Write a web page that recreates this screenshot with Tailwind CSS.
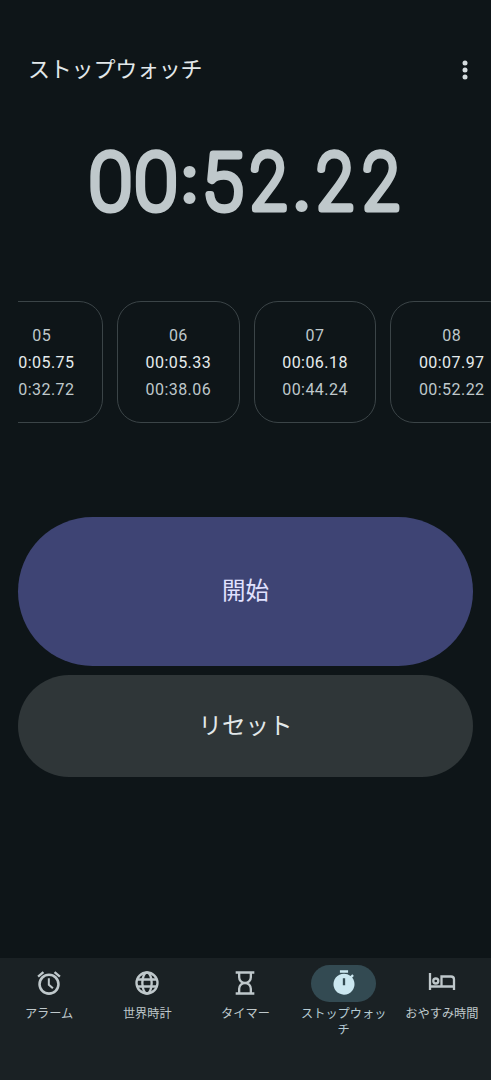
<!DOCTYPE html>
<html lang="ja">
<head>
<meta charset="utf-8">
<title>ストップウォッチ</title>
<script src="https://cdn.jsdelivr.net/npm/@tailwindcss/browser@4"></script>
</head>
<body class="bg-[#0e1518] overflow-hidden font-['Noto_Sans_CJK_JP',sans-serif]">
<div class="w-[491px] h-[1080px] flex flex-col overflow-hidden">
  <header class="h-[140px] shrink-0 flex items-center justify-between pl-7 pr-[18px]">
    <h1 class="text-[22px] leading-8 tracking-[-0.2px] text-[#e2e8ea] pb-[7px]">ストップウォッチ</h1>
    <svg class="w-4 h-6" viewBox="0 0 16 24" fill="#d5dcde"><circle cx="8" cy="5" r="2.5"/><circle cx="8" cy="12" r="2.5"/><circle cx="8" cy="19" r="2.5"/></svg>
  </header>
  <div class="h-[161px] shrink-0">
    <svg class="w-[491px] h-[90px] overflow-visible font-['Roboto',sans-serif] font-thin text-[77.5px]" viewBox="0 140 491 90" fill="#bfc8cb" stroke="#bfc8cb" stroke-width="7.2" stroke-linejoin="round" stroke-linecap="round" text-anchor="middle">
      <text y="208.500" x="110.500 156">00</text>
      <text y="201" x="189.500" stroke-width="5" class="text-[62px] font-normal">:</text>
      <g transform="translate(222.500 208.500) scale(.96 1)"><text>5</text></g>
      <g transform="translate(268.500 208.500) scale(.87 1)"><text>2</text></g>
      <text y="209" x="302" stroke-width="5" class="text-[62px] font-normal">.</text>
      <g transform="translate(335 208.500) scale(.87 1)"><text x="0 52.900">22</text></g>
    </svg>
  </div>
  <section class="ml-[18px] h-[122px] shrink-0 overflow-hidden flex font-['Roboto',sans-serif] text-[16px] leading-[27px] tracking-[0.45px] text-center text-[#bfc8cb]">
    <div class="flex gap-[14px] -ml-[37.7px] shrink-0">
      <div class="w-[122.7px] h-[122px] shrink-0 rounded-[24px] border border-[#3b4447] pt-5"><p>05</p><p class="text-[#e6eced]">00:05.75</p><p>00:32.72</p></div>
      <div class="w-[122.7px] h-[122px] shrink-0 rounded-[24px] border border-[#3b4447] pt-5"><p>06</p><p class="text-[#e6eced]">00:05.33</p><p>00:38.06</p></div>
      <div class="w-[122.7px] h-[122px] shrink-0 rounded-[24px] border border-[#3b4447] pt-5"><p>07</p><p class="text-[#e6eced]">00:06.18</p><p>00:44.24</p></div>
      <div class="w-[122.7px] h-[122px] shrink-0 rounded-[24px] border border-[#3b4447] pt-5"><p>08</p><p class="text-[#e6eced]">00:07.97</p><p>00:52.22</p></div>
    </div>
  </section>
  <main class="mt-[94px] px-[18px] flex flex-col gap-[9px] text-[23.5px]">
    <button class="h-[149px] rounded-full bg-[#3e4474] text-[#e0e1ff] pb-[3px]">開始</button>
    <button class="h-[102px] rounded-full bg-[#2f3638] text-[#e2e8ea] pb-[3px]">リセット</button>
  </main>
  <nav class="mt-auto h-[122px] shrink-0 bg-[#1a2124] grid grid-cols-5 pt-[7px] text-[12.2px] leading-[15.5px] text-center text-[#bfc8cb]">
    <div class="flex flex-col items-center gap-1">
      <span class="w-[65px] h-[37px] flex items-center justify-center pb-0.5"><svg class="size-7" viewBox="0 0 24 24" fill="currentColor"><path d="m22 5.720-4.600-3.860-1.290 1.530 4.600 3.860zM7.880 3.390 6.600 1.860 2 5.710l1.290 1.530zM12.700 8H11v6l3.750 3.200 1.200-1.350-3.250-2.750zM12 3.800a9.200 9.200 0 1 0 0 18.400 9.200 9.200 0 0 0 0-18.400m0 16.200a7 7 0 1 1 0-14 7 7 0 0 1 0 14"/></svg></span>
      <span>アラーム</span>
    </div>
    <div class="flex flex-col items-center gap-1">
      <span class="w-[65px] h-[37px] flex items-center justify-center pb-0.5"><svg class="size-7" viewBox="0 0 24 24" fill="none" stroke="currentColor" stroke-width="2"><circle cx="12" cy="12" r="9"/><ellipse cx="12" cy="12" rx="4" ry="9"/><path d="M3.7 9h16.6M3.7 15h16.6"/></svg></span>
      <span>世界時計</span>
    </div>
    <div class="flex flex-col items-center gap-1">
      <span class="w-[65px] h-[37px] flex items-center justify-center pb-0.5"><svg class="size-7" viewBox="0 0 24 24" fill="none" stroke="currentColor" stroke-width="2"><path d="M4 3h16M4 21h16M7 3v4c0 2.500 2 5 5 5s5-2.500 5-5V3M7 21v-4c0-2.500 2-5 5-5s5 2.500 5 5v4"/></svg></span>
      <span>タイマー</span>
    </div>
    <div class="flex flex-col items-center gap-1 text-[#cbe7f0]">
      <span class="w-[65px] h-[37px] rounded-full bg-[#334a52] flex items-center justify-center pb-0.5"><svg class="size-7" viewBox="0 0 24 24" fill="currentColor"><path d="M15.500 1h-7v2.200h7zm3.530 6.390 1.420-1.420c-.43-.51-.9-.99-1.410-1.410l-1.420 1.420A8.960 8.960 0 0 0 12 4a9 9 0 1 0 7.030 3.390M13 14h-2V8h2z"/></svg></span>
      <span class="text-[#b5cbd3]">ストップウォッ<br>チ</span>
    </div>
    <div class="flex flex-col items-center gap-1">
      <span class="w-[65px] h-[37px] flex items-center justify-center pb-1"><svg class="w-7 h-7" viewBox="0 0 28 28" fill="none" stroke="currentColor" stroke-width="2.300"><path d="M2 5v17M2 18.500h24.500M13.500 18.500V8.500H23q3 0 3 3V22"/><circle cx="7.800" cy="13" r="2.500"/></svg></span>
      <span class="whitespace-nowrap">おやすみ時間</span>
    </div>
  </nav>
</div>
</body>
</html>
